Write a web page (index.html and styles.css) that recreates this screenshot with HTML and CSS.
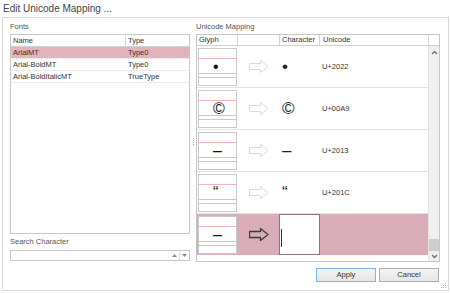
FILE: index.html
```html
<!DOCTYPE html>
<html>
<head>
<meta charset="utf-8">
<title>Edit Unicode Mapping</title>
<link rel="stylesheet" href="styles.css">
</head>
<body>
<div class="window">
  <div class="titlebar">Edit Unicode Mapping ...</div>
  <div class="frame">
    <div class="main">
      <div class="left">
        <div class="label">Fonts</div>
        <div class="fonts">
          <div class="fhead"><div class="fc name">Name</div><div class="fc type">Type</div></div>
          <div class="frow sel"><div class="fc name">ArialMT</div><div class="fc type">Type0</div></div>
          <div class="frow"><div class="fc name">Arial-BoldMT</div><div class="fc type">Type0</div></div>
          <div class="frow"><div class="fc name">Arial-BoldItalicMT</div><div class="fc type">TrueType</div></div>
        </div>
        <div class="label search-label">Search Character</div>
        <div class="search">
          <div class="search-input"></div>
          <div class="spin"><svg width="5" height="3" viewBox="0 0 5 3"><path d="M0 3L2.5 0L5 3Z" fill="#8a8a8a"/></svg></div>
          <div class="spin sep"><svg width="5" height="3" viewBox="0 0 5 3"><path d="M0 0L2.5 3L5 0Z" fill="#8a8a8a"/></svg></div>
        </div>
      </div>
      <div class="splitter"><div class="dots"><i></i><i></i><i></i><i></i></div></div>
      <div class="right">
        <div class="label">Unicode Mapping</div>
        <div class="map">
          <div class="mhead">
            <div class="mc c-glyph">Glyph</div>
            <div class="mc c-arrow"></div>
            <div class="mc c-char">Character</div>
            <div class="mc c-code">Unicode</div>
            <div class="mc c-scroll"></div>
          </div>
          <div class="mbody">
            <div class="rows">
              <div class="mrow">
                <div class="cell c-glyph"><div class="gbox"><i class="gl l1"></i><i class="gl l2"></i><i class="gl l3"></i><span class="g">•</span></div></div>
                <div class="cell c-arrow"><svg class="arrow" width="20" height="13" viewBox="0 0 20 13"><path d="M0.5 3.5H11.5V0.5L19 6.5L11.5 12.5V9.5H0.5Z"/></svg></div>
                <div class="cell c-char">•</div>
                <div class="cell c-code">U+2022</div>
              </div>
              <div class="mrow">
                <div class="cell c-glyph"><div class="gbox"><i class="gl l1"></i><i class="gl l2"></i><i class="gl l3"></i><span class="g">©</span></div></div>
                <div class="cell c-arrow"><svg class="arrow" width="20" height="13" viewBox="0 0 20 13"><path d="M0.5 3.5H11.5V0.5L19 6.5L11.5 12.5V9.5H0.5Z"/></svg></div>
                <div class="cell c-char">©</div>
                <div class="cell c-code">U+00A9</div>
              </div>
              <div class="mrow">
                <div class="cell c-glyph"><div class="gbox"><i class="gl l1"></i><i class="gl l2"></i><i class="gl l3"></i><span class="g">–</span></div></div>
                <div class="cell c-arrow"><svg class="arrow" width="20" height="13" viewBox="0 0 20 13"><path d="M0.5 3.5H11.5V0.5L19 6.5L11.5 12.5V9.5H0.5Z"/></svg></div>
                <div class="cell c-char">–</div>
                <div class="cell c-code">U+2013</div>
              </div>
              <div class="mrow">
                <div class="cell c-glyph"><div class="gbox"><i class="gl l1"></i><i class="gl l2"></i><i class="gl l3"></i><span class="g">“</span></div></div>
                <div class="cell c-arrow"><svg class="arrow" width="20" height="13" viewBox="0 0 20 13"><path d="M0.5 3.5H11.5V0.5L19 6.5L11.5 12.5V9.5H0.5Z"/></svg></div>
                <div class="cell c-char">“</div>
                <div class="cell c-code">U+201C</div>
              </div>
              <div class="mrow sel">
                <div class="cell c-glyph"><div class="gbox"><i class="gl l1"></i><i class="gl l2"></i><i class="gl l3"></i><span class="g">–</span></div></div>
                <div class="cell c-arrow"><svg class="arrow" width="20" height="13" viewBox="0 0 20 13"><path d="M0.5 3.5H11.5V0.5L19 6.5L11.5 12.5V9.5H0.5Z"/></svg></div>
                <div class="cell c-char"><div class="editor"><i class="caret"></i></div></div>
                <div class="cell c-code"></div>
              </div>
            </div>
            <div class="vscroll">
              <div class="sb-up"><svg width="7" height="5" viewBox="0 0 7 5"><path d="M1 4L3.5 1.5L6 4" fill="none" stroke="#6f6f6f" stroke-width="1.3"/></svg></div>
              <div class="sb-track"><div class="sb-thumb"></div></div>
              <div class="sb-down"><svg width="7" height="5" viewBox="0 0 7 5"><path d="M1 1L3.5 3.5L6 1" fill="none" stroke="#6f6f6f" stroke-width="1.3"/></svg></div>
            </div>
          </div>
        </div>
      </div>
    </div>
    <div class="buttons">
      <button class="btn primary">Apply</button>
      <button class="btn">Cancel</button>
    </div>
    <svg class="grip" width="6" height="6" viewBox="0 0 6 6"><g fill="#a8a8a8"><rect x="4" y="0" width="1" height="1"/><rect x="2" y="2" width="1" height="1"/><rect x="4" y="2" width="1" height="1"/><rect x="0" y="4" width="1" height="1"/><rect x="2" y="4" width="1" height="1"/><rect x="4" y="4" width="1" height="1"/></g></svg>
  </div>
</div>
</body>
</html>
```
FILE: styles.css
```css
html, body {
  margin: 0;
  padding: 0;
  background: #fff;
}
body {
  font-family: "Liberation Sans Narrow", "Liberation Sans", Arial, sans-serif;
  font-size: 7.5px;
  color: #333;
}
.window {
  width: 450px;
  height: 293px;
}
.titlebar {
  height: 17px;
  line-height: 17px;
  padding-left: 3px;
  font-size: 10px;
  color: #444;
  white-space: nowrap;
}
.frame {
  position: relative;
  margin-left: 2px;
  width: 447px;
  height: 274px;
  box-sizing: border-box;
  border: 1px solid #d9d9d9;
  display: flex;
  flex-direction: column;
}
.main {
  display: flex;
  height: 244px;
  box-sizing: border-box;
  padding: 3px 8px 0 7px;
}
.left {
  width: 180px;
  display: flex;
  flex-direction: column;
}
.label {
  height: 13px;
  line-height: 11px;
  color: #555;
  white-space: nowrap;
}
.search-label {
  height: 16px;
  padding-top: 2px;
  box-sizing: border-box;
}
.fonts {
  height: 200px;
  box-sizing: border-box;
  border: 1px solid #c8c8c8;
}
.fhead {
  display: flex;
  height: 12px;
  box-sizing: border-box;
  border-bottom: 1px solid #d2d2d2;
  line-height: 11px;
}
.fc {
  box-sizing: border-box;
  padding-left: 2px;
  white-space: nowrap;
}
.fc.name {
  width: 115px;
}
.fhead .fc.name {
  border-right: 1px solid #d6d6d6;
}
.frow {
  display: flex;
  height: 12px;
  box-sizing: border-box;
  border-bottom: 1px solid #ececec;
  line-height: 11px;
}
.frow.sel {
  background: #e3b3bb;
}
.search {
  display: flex;
  height: 11px;
  box-sizing: border-box;
  border: 1px solid #c8c8c8;
}
.search-input {
  flex: 1;
}
.spin {
  width: 9px;
  display: flex;
  align-items: center;
  justify-content: center;
}
.spin.sep {
  border-left: 1px solid #e2e2e2;
}
.splitter {
  width: 6px;
  display: flex;
  align-items: center;
  justify-content: center;
}
.dots {
  display: flex;
  flex-direction: column;
  gap: 1px;
}
.dots i {
  display: block;
  width: 1px;
  height: 1px;
  background: #9a9a9a;
}
.right {
  width: 244px;
  display: flex;
  flex-direction: column;
}
.map {
  height: 228px;
  box-sizing: border-box;
  border: 1px solid #c6c6c6;
  display: flex;
  flex-direction: column;
}
.mhead {
  display: flex;
  height: 11px;
  box-sizing: border-box;
  border-bottom: 1px solid #cfcfcf;
  line-height: 10px;
}
.mc {
  box-sizing: border-box;
  padding-left: 2px;
  border-right: 1px solid #d4d4d4;
  white-space: nowrap;
}
.mc.c-glyph { width: 41px; }
.mc.c-arrow { width: 42px; }
.mc.c-char { width: 40px; }
.mc.c-code { width: 109px; padding-left: 3px; }
.mc.c-scroll { width: 10px; border-right: none; }
.mbody {
  flex: 1;
  display: flex;
  min-height: 0;
}
.rows {
  width: 231px;
}
.mrow {
  display: flex;
  height: 42px;
  box-sizing: border-box;
  border-bottom: 1px solid #e3e3e3;
}
.mrow:last-child {
  height: 41px;
  border-bottom: none;
}
.mrow.sel {
  background: #d9adb7;
}
.cell.c-glyph { width: 41px; }
.cell.c-arrow {
  width: 42px;
  display: flex;
  align-items: center;
  justify-content: center;
}
.cell.c-char {
  width: 40px;
  display: flex;
  align-items: center;
  padding-left: 2px;
  box-sizing: border-box;
  font-family: "Liberation Sans", Arial, sans-serif;
  font-size: 17px;
  color: #222;
}
.cell.c-code {
  flex: 1;
  display: flex;
  align-items: center;
  padding-left: 2px;
  white-space: nowrap;
}
.gbox {
  position: relative;
  width: 39px;
  height: 38px;
  margin: 2px 0 0 1px;
  box-sizing: border-box;
  border: 1px solid #c9c9c9;
  background: #fff;
}
.gl {
  position: absolute;
  left: 0;
  right: 0;
  height: 1px;
  background: #f5b3b3;
}
.l1 { top: 9px; }
.l2 { top: 24px; }
.l3 { top: 28px; }
.g {
  position: absolute;
  left: 14px;
  top: 10px;
  font-family: "Liberation Sans", Arial, sans-serif;
  font-size: 16px;
  line-height: 16px;
  color: #111;
}
.arrow path {
  fill: #fff;
  stroke: #d9d9d9;
  stroke-width: 1;
}
.sel .arrow path {
  fill: none;
  stroke: #3a3a3a;
  stroke-width: 1.3;
}
.mrow.sel .cell.c-char {
  padding-left: 0;
}
.editor {
  margin-left: -1px;
  width: 41px;
  height: 41px;
  box-sizing: border-box;
  border: 1px solid #8c767c;
  background: #fff;
  padding: 14px 0 0 1px;
}
.caret {
  display: block;
  width: 1px;
  height: 18px;
  background: #333;
}
.vscroll {
  width: 11px;
  box-sizing: border-box;
  border-left: 1px solid #e4e4e4;
  background: #f0f0f0;
  display: flex;
  flex-direction: column;
}
.sb-up {
  height: 12px;
  display: flex;
  align-items: center;
  justify-content: center;
}
.sb-track {
  flex: 1;
  display: flex;
  flex-direction: column;
  justify-content: flex-end;
}
.sb-thumb {
  height: 12px;
  background: #cdcdcd;
}
.sb-down {
  height: 10px;
  display: flex;
  align-items: center;
  justify-content: center;
}
.buttons {
  display: flex;
  justify-content: flex-end;
  gap: 3px;
  margin-top: 6px;
  padding-right: 9px;
}
.btn {
  width: 60px;
  height: 14px;
  box-sizing: border-box;
  padding: 0;
  margin: 0;
  border: 1px solid #adadad;
  background: linear-gradient(#f3f3f3, #e6e6e6);
  font-family: inherit;
  font-size: 7.5px;
  line-height: 12px;
  color: #333;
}
.btn.primary {
  border-color: #7eb4ea;
}
.grip {
  position: absolute;
  right: 1px;
  bottom: 1px;
}
```
